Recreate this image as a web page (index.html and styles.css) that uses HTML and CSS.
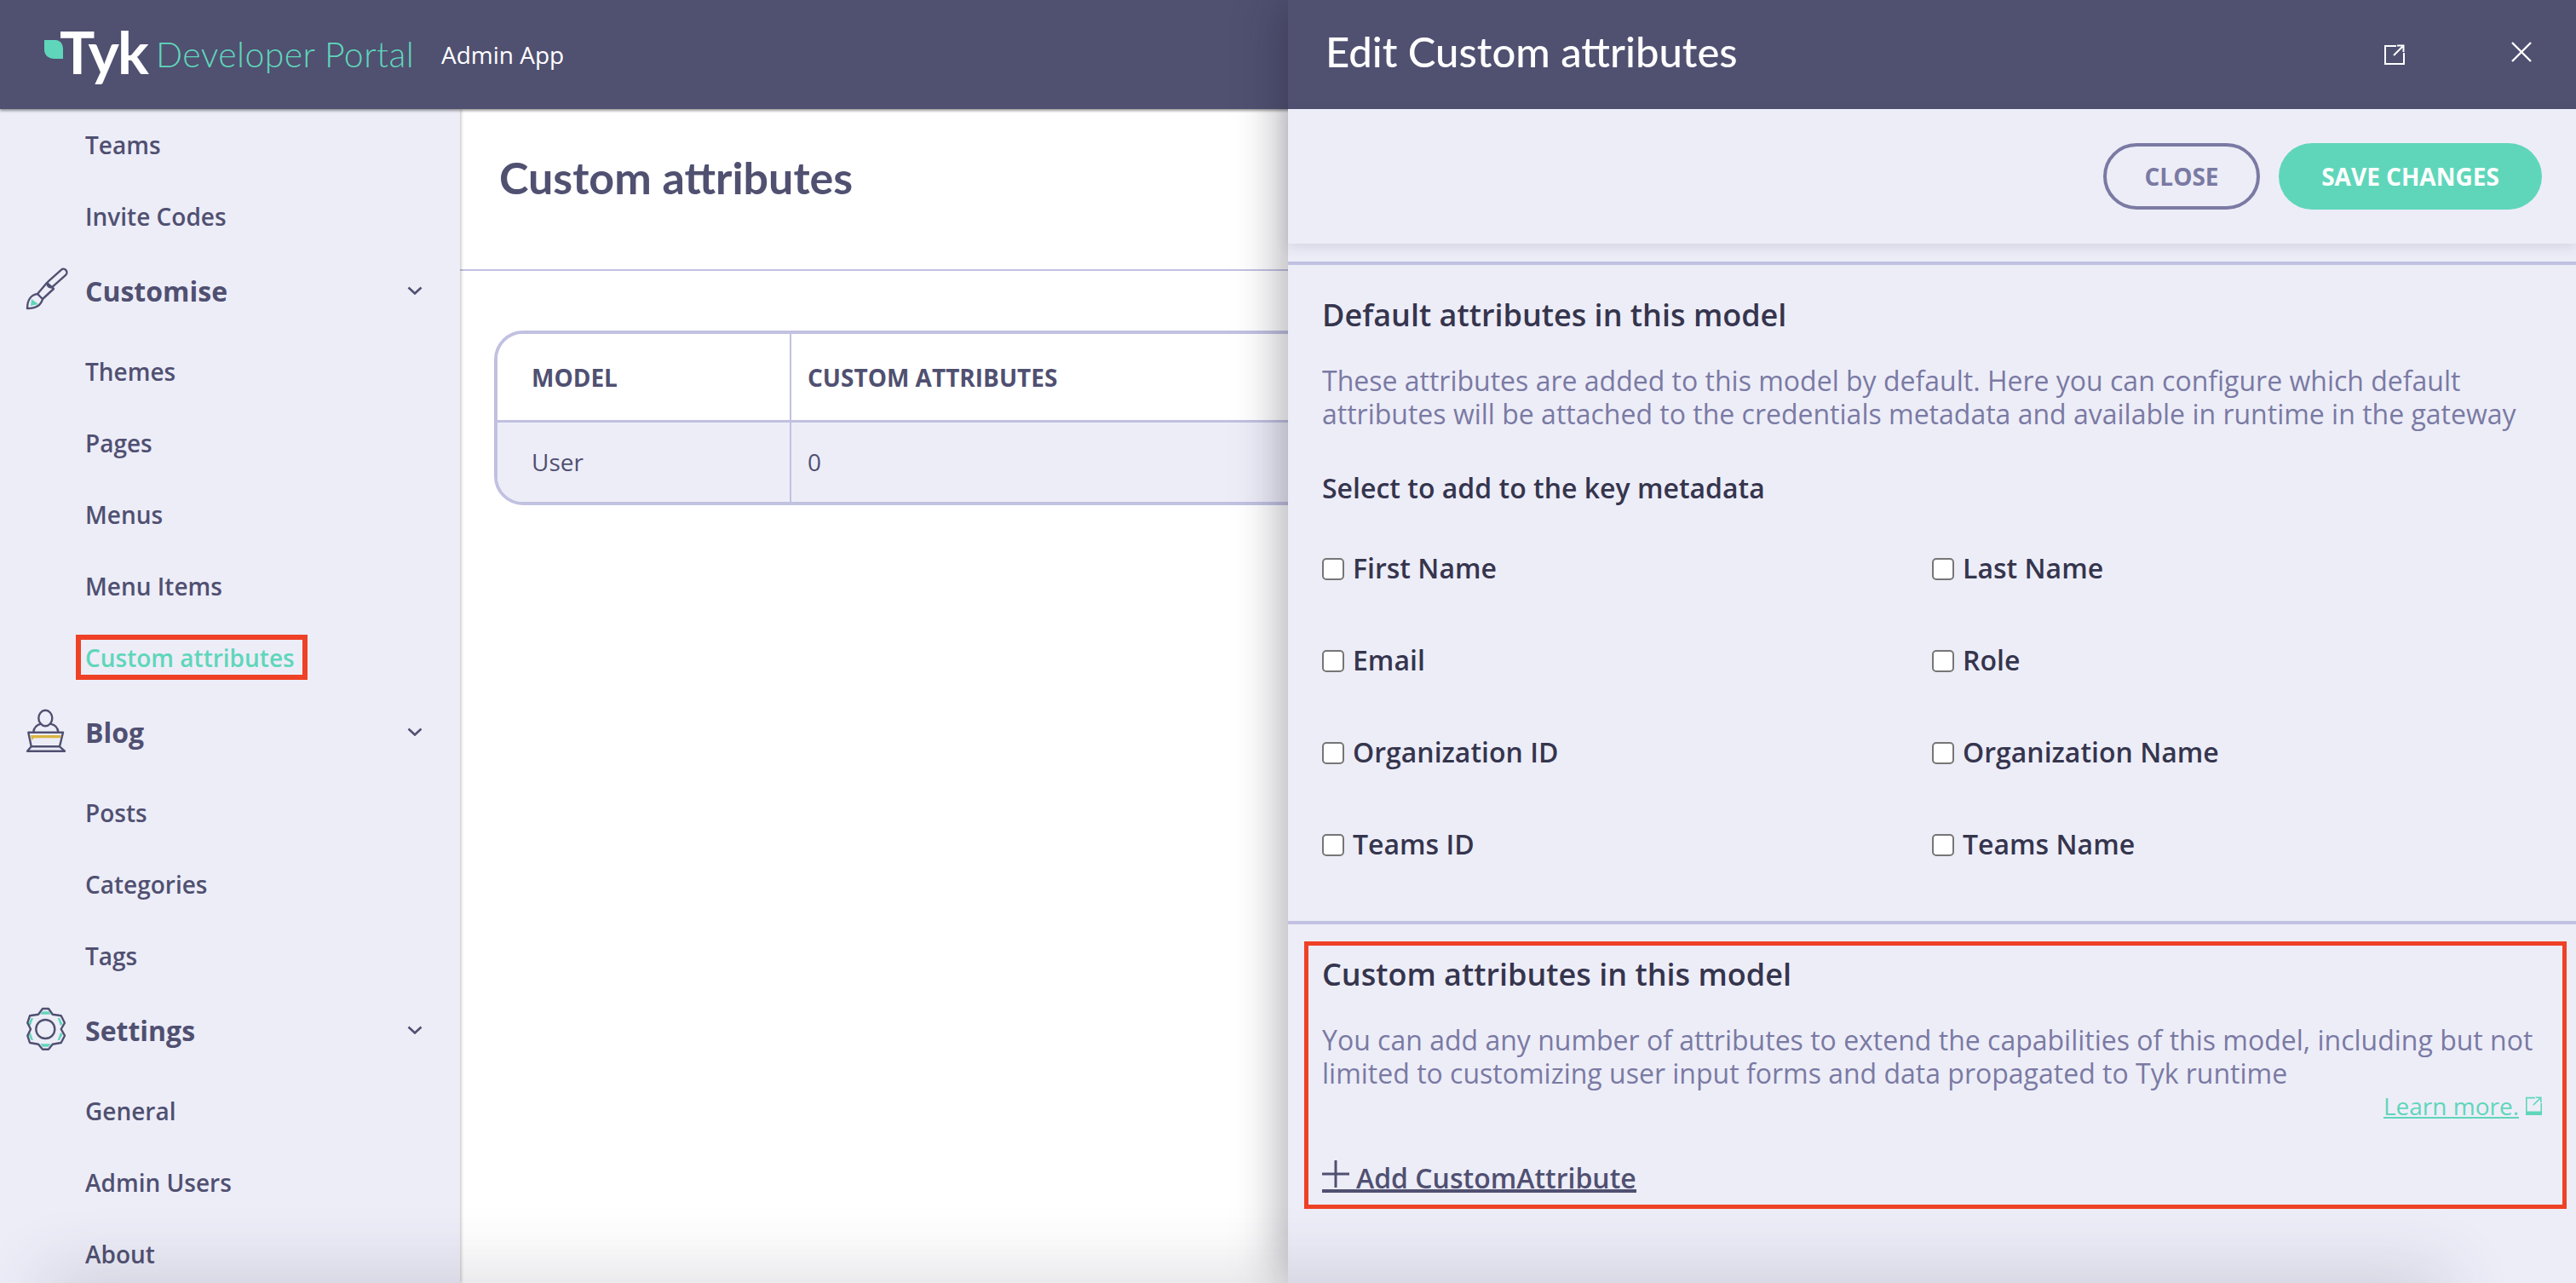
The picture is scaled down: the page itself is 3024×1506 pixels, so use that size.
FILE: index.html
```html
<!DOCTYPE html>
<html lang="en">
<head>
<meta charset="utf-8">
<title>Tyk Developer Portal</title>
<link rel="stylesheet" href="styles.css">
</head>
<body>
<div class="app">
  <header class="topbar">
    <div class="brand">
      <svg class="leaf" viewBox="0 0 22 22"><path d="M0 0H13C19 0 22 5 22 11V22H12C5 22 0 18 0 11Z"/></svg>
      <span class="tyk">Tyk</span>
    </div>
    <span class="portal-name">Developer Portal</span>
    <span class="admin-app">Admin App</span>
  </header>
  <div class="body">
    <nav class="sidebar">
      <a class="item">Teams</a>
      <a class="item">Invite Codes</a>
      <div class="group">
        <svg class="icon" viewBox="0 0 60 60"><polygon class="teal" points="13,40 21,46 12,48"/><rect class="line" x="29" y="11.5" width="28" height="8" rx="4" transform="rotate(-42 43 15.5)"/><path class="line" d="M31 21L39 28L26 40L20 34Z"/><path class="line" d="M20 34C12 35 8 42 8 51C17 51 24 48 26 40"/></svg>
        <span>Customise</span>
        <svg class="chev" viewBox="0 0 18 10"><path d="M1.5 1.5L9 8.5L16.5 1.5"/></svg>
      </div>
      <a class="item">Themes</a>
      <a class="item">Pages</a>
      <a class="item">Menus</a>
      <a class="item">Menu Items</a>
      <a class="item active"><span class="mark">Custom attributes</span></a>
      <div class="group">
        <svg class="icon" viewBox="0 0 60 60"><polygon class="gold" points="12,34 47.7,34 47,37.3 16,37.3 13.3,40"/><ellipse class="line" cx="29.3" cy="14" rx="8" ry="9.3"/><path class="line" d="M15.3 30.7C15.5 25 19 22 24.3 20.7M44.3 30.7C44 25 41 22 35.3 20.7"/><path class="line" d="M9.3 30.7H50L46 47.3H12.7ZM12.7 47.3L8 52.7H52L46 47.3M13 47.3H30"/></svg>
        <span>Blog</span>
        <svg class="chev" viewBox="0 0 18 10"><path d="M1.5 1.5L9 8.5L16.5 1.5"/></svg>
      </div>
      <a class="item">Posts</a>
      <a class="item">Categories</a>
      <a class="item">Tags</a>
      <div class="group">
        <svg class="icon" viewBox="0 0 60 60"><polygon class="teal" points="26,8.3 33,8.3 35.3,11.7 23.3,11.7"/><polygon class="teal" points="26,49.7 33,49.7 35.3,46.3 23.3,46.3"/><polygon class="teal" points="43.7,16 46,16 49.5,23 47,25"/><polygon class="teal" points="15,16 12.7,16 9.2,23 11.7,25"/><polygon class="teal" points="43.7,42 46,42 49.5,35 47,33"/><polygon class="teal" points="15,42 12.7,42 9.2,35 11.7,33"/><circle class="line" cx="29.3" cy="29" r="11"/><path class="line" d="M26 5H33L37.7 11.7L47.7 13.3L52 21.7L47.7 29L52 36.7L47.7 45L37.7 46.7L33 52.7H26L21 46.7L11 45L8.3 36.7L12 29L8.3 21.7L11 13.3L21 11.7Z"/></svg>
        <span>Settings</span>
        <svg class="chev" viewBox="0 0 18 10"><path d="M1.5 1.5L9 8.5L16.5 1.5"/></svg>
      </div>
      <a class="item">General</a>
      <a class="item">Admin Users</a>
      <a class="item">About</a>
    </nav>
    <main class="main">
      <div class="page-head"><h1>Custom attributes</h1></div>
      <div class="content">
        <div class="table-wrap">
          <table>
            <thead><tr><th class="col-model">MODEL</th><th>CUSTOM ATTRIBUTES</th></tr></thead>
            <tbody><tr><td class="col-model">User</td><td>0</td></tr></tbody>
          </table>
        </div>
      </div>
    </main>
  </div>

  <aside class="drawer">
    <div class="drawer-head">
      <h2>Edit Custom attributes</h2>
      <svg class="ext" viewBox="0 0 24 24"><path d="M14 2H1V23H23V10M11 13L22 2M15 1.5H22.5V9"/></svg>
      <svg class="close-x" viewBox="0 0 24 24"><path d="M1 1L23 23M23 1L1 23"/></svg>
    </div>
    <div class="toolbar">
      <button class="btn btn-outline">CLOSE</button>
      <button class="btn btn-solid">SAVE CHANGES</button>
    </div>
    <section class="sec sec-default">
      <h3>Default attributes in this model</h3>
      <p>These attributes are added to this model by default. Here you can configure which default attributes will be attached to the credentials metadata and available in runtime in the gateway</p>
      <h4>Select to add to the key metadata</h4>
      <div class="checks">
        <label><input type="checkbox">First Name</label>
        <label><input type="checkbox">Last Name</label>
        <label><input type="checkbox">Email</label>
        <label><input type="checkbox">Role</label>
        <label><input type="checkbox">Organization ID</label>
        <label><input type="checkbox">Organization Name</label>
        <label><input type="checkbox">Teams ID</label>
        <label><input type="checkbox">Teams Name</label>
      </div>
    </section>
    <section class="sec sec-custom">
      <div class="mark-box">
        <h3>Custom attributes in this model</h3>
        <p>You can add any number of attributes to extend the capabilities of this model, including but not limited to customizing user input forms and data propagated to Tyk runtime</p>
        <div class="learn-row"><a class="learn">Learn more. <svg class="ext-small" viewBox="0 0 24 24"><path d="M14 2H1V23H23V10M11 13L22 2M15 1.5H22.5V9"/></svg></a></div>
        <a class="add"><svg class="plus" viewBox="0 0 32 32"><path d="M16 0V32M0 16H32"/></svg> Add CustomAttribute</a>
      </div>
    </section>
  </aside>
  <div class="bottom-fade"></div>
</div>
</body>
</html>
```
FILE: styles.css
```css
* { box-sizing: border-box; }
html, body { margin: 0; padding: 0; height: 100%; overflow: hidden; }
body { font-family: "Open Sans", "Liberation Sans", sans-serif; color: #505071; background: #fff; }
.app { position: relative; width: 100%; height: 100vh; overflow: hidden; display: flex; flex-direction: column; }

.topbar { height: 128px; flex: none; background: #505071; display: flex; align-items: center; padding-left: 52px; box-shadow: 0 2px 3px rgba(0,0,0,.4); position: relative; z-index: 2; }
.brand { display: flex; align-items: flex-start; width: 131px; height: 128px; }
.leaf { width: 22px; height: 22px; margin-top: 47px; fill: #5fd6ba; flex: none; }
.tyk { font-family: "Lato", sans-serif; font-weight: 700; font-size: 69px; line-height: 1; color: #fff; letter-spacing: -2px; margin-top: 26px; margin-left: -4px; }
.portal-name { font-family: "Lato", sans-serif; font-weight: 300; font-size: 41px; letter-spacing: .4px; color: #5fd6ba; width: 335px; margin-bottom: 2px; }
.admin-app { font-size: 28px; color: #fff; }

.body { flex: 1; display: flex; min-height: 0; }
.sidebar { width: 540px; flex: none; background: #ededf8; box-shadow: 2px 0 3px rgba(0,0,0,.18); display: flex; flex-direction: column; position: relative; z-index: 1; }
.item { height: 84px; flex: none; display: flex; align-items: center; padding-left: 100px; padding-bottom: 1px; font-size: 28px; font-weight: 600; color: #505071; }
.item.active { color: #5fd6ba; padding-left: 89px; }
.mark { border: 6px solid #ee4126; height: 53px; display: flex; align-items: center; padding: 0 8px 0 5px; width: 272px; white-space: nowrap; }
.group { height: 92px; margin-bottom: 6px; flex: none; display: flex; align-items: center; padding-left: 24px; padding-bottom: 2px; font-size: 32px; font-weight: 700; color: #505071; }
.group span { margin-left: 16px; flex: 1; }
.icon { width: 60px; height: 60px; flex: none; }
.icon .line { fill: none; stroke: #505071; stroke-width: 2.4; stroke-linejoin: round; stroke-linecap: round; }
.icon .teal { fill: #5fd6ba; }
.icon .gold { fill: #d9b53e; }
.chev { width: 18px; height: 10px; margin-right: 44px; fill: none; stroke: #505071; stroke-width: 2.6; }

.main { flex: 1; min-width: 0; background: #fff; }
.page-head { height: 190px; border-bottom: 2px solid #c1c1e1; padding-left: 46px; display: flex; align-items: center; padding-bottom: 28px; }
h1 { margin: 0; font-family: "Lato", sans-serif; font-weight: 700; font-size: 52px; color: #505071; }
.content { padding: 70px 40px 0; }
.table-wrap { border: 4px solid #c1c1e1; border-radius: 34px; overflow: hidden; }
table { width: 100%; border-collapse: collapse; }
th { height: 102px; padding: 2px 0 0 19px; text-align: left; font-size: 28px; font-weight: 700; color: #505071; background: #fff; border-bottom: 3px solid #c1c1e1; }
td { height: 95px; padding: 0 0 0 19px; font-size: 28px; color: #505071; background: #ededf8; }
.col-model { width: 344px; padding-left: 40px; border-right: 2px solid #c1c1e1; }

.drawer { position: absolute; top: 0; right: 0; bottom: 0; width: 1512px; background: #ededf8; box-shadow: -8px 0 50px rgba(30,30,50,.36); z-index: 3; display: flex; flex-direction: column; }
.drawer-head { height: 128px; flex: none; background: #505071; display: flex; align-items: center; padding: 0 52px 8px 44px; }
h2 { margin: 0; flex: 1; font-family: "Lato", sans-serif; font-weight: 500; font-size: 49px; color: #fff; }
.ext { width: 24px; height: 24px; fill: none; stroke: #fff; stroke-width: 2; margin-right: 125px; margin-top: 8px; }
.close-x { width: 24px; height: 24px; fill: none; stroke: #fff; stroke-width: 2.4; margin-top: 2px; }
.toolbar { height: 158px; flex: none; display: flex; justify-content: flex-end; align-items: center; gap: 22px; padding-right: 40px; background: #ededf8; box-shadow: 0 4px 14px rgba(60,60,90,.14); position: relative; }
.btn { height: 78px; border-radius: 39px; font-family: inherit; font-size: 28px; font-weight: 700; display: flex; align-items: center; justify-content: center; padding: 0; }
.btn-outline { width: 184px; background: transparent; border: 4px solid #7a7aa3; color: #7a7aa3; }
.btn-solid { width: 309px; background: #5fd6ba; border: 0; color: #fff; }

.sec { border-top: 4px solid #c1c1e1; padding: 0 40px; flex: none; }
.sec-default { margin-top: 21px; height: 774px; padding-top: 36px; }
h3 { margin: 0; font-size: 36px; line-height: 46px; font-weight: 600; color: #35354d; }
.sec p { margin: 34px 0 0; font-size: 32px; line-height: 39px; color: #7a7aa3; }
h4 { margin: 48px 0 0; font-size: 32px; line-height: 40px; font-weight: 600; color: #35354d; }
.checks { display: grid; grid-template-columns: 716px 1fr; grid-auto-rows: 108px; margin-top: 21px; }
.checks label { display: flex; align-items: center; height: 108px; padding-bottom: 3px; font-size: 32px; font-weight: 600; color: #35354d; }
.checks input { appearance: none; -webkit-appearance: none; width: 26px; height: 26px; margin: 3px 10px 0 0; background: #fff; border: 2px solid #767676; border-radius: 5px; flex: none; }

.sec-custom { padding: 20px 11px 0 19px; }
.mark-box { border: 5px solid #ee4126; height: 314px; padding: 11px 24px 0 16px; }
.mark-box p { margin-top: 34px; }
.learn-row { display: flex; justify-content: flex-end; margin-top: 0; }
.learn { font-size: 28px; line-height: 38px; color: #5fd6ba; text-decoration: underline; display: flex; align-items: center; gap: 8px; }
.ext-small { width: 19px; height: 22px; fill: none; stroke: #5fd6ba; stroke-width: 2; border-bottom: 3px solid #5fd6ba; }
.add { display: inline-flex; gap: 8px; margin-top: 53px; font-size: 32px; font-weight: 600; color: #505071; border-bottom: 4px solid #505071; line-height: 26px; }
.plus { width: 32px; height: 32px; fill: none; stroke: #505071; stroke-width: 3; margin: -8px 0 0; flex: none; }

.bottom-fade { position: absolute; left: 60px; right: 160px; bottom: -40px; height: 40px; box-shadow: 0 0 80px 10px rgba(60,60,80,.2); z-index: 4; }
```
